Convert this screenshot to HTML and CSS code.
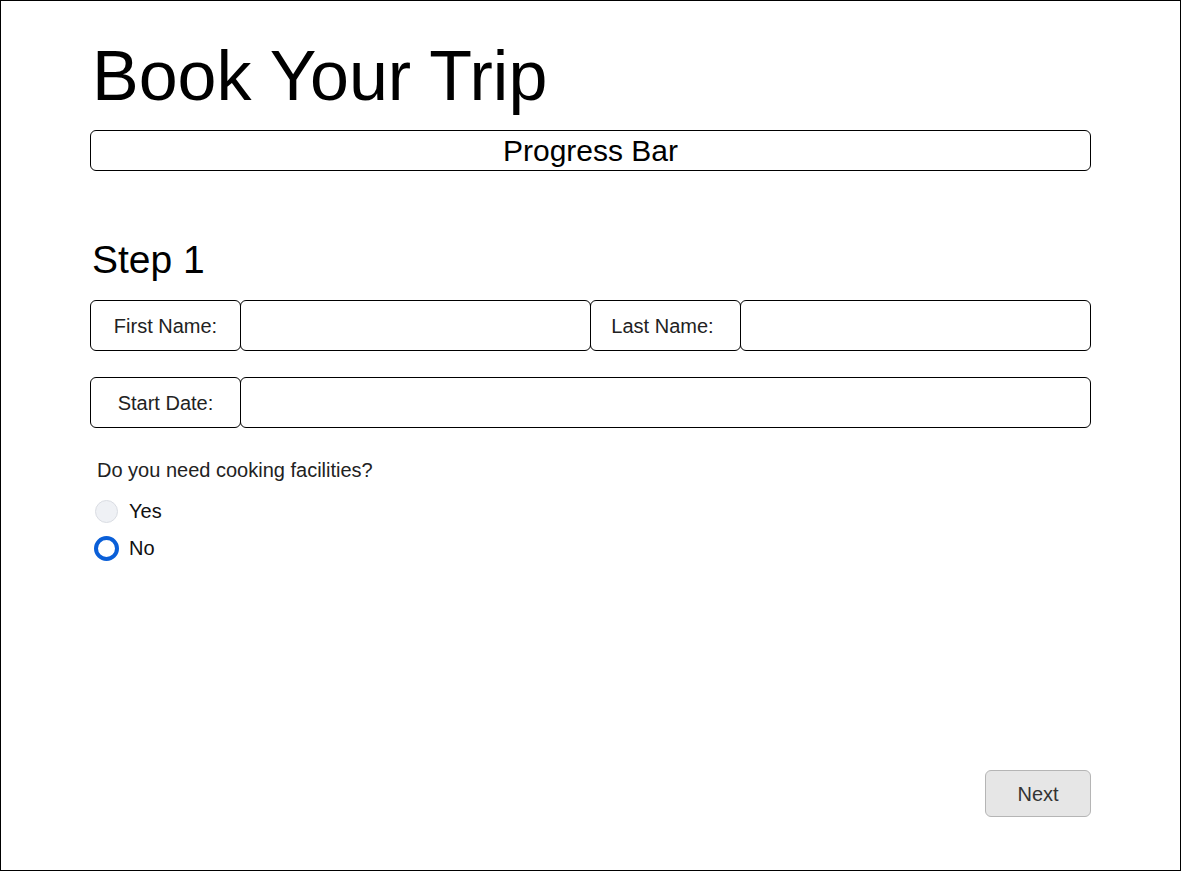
FILE: index.html
```html
<!DOCTYPE html>
<html lang="en">
<head>
<meta charset="utf-8">
<title>Book Your Trip</title>
<link rel="stylesheet" href="styles.css">
</head>
<body>
<div class="page">
  <h1 class="title">Book Your Trip</h1>
  <div class="progress">Progress Bar</div>
  <h2 class="step">Step 1</h2>
  <div class="row">
    <label class="label" for="fn">First Name:</label>
    <input class="field" id="fn" type="text">
    <label class="label label-last" for="ln">Last Name:</label>
    <input class="field" id="ln" type="text">
  </div>
  <div class="row">
    <label class="label" for="sd">Start Date:</label>
    <input class="field wide" id="sd" type="text">
  </div>
  <div class="question">
    <p class="q-text">Do you need cooking facilities?</p>
    <label class="opt"><input class="radio" type="radio" name="cook" value="yes"><span>Yes</span></label>
    <label class="opt"><input class="radio focused" type="radio" name="cook" value="no"><span>No</span></label>
  </div>
  <div class="actions">
    <button class="next" type="button">Next</button>
  </div>
</div>
</body>
</html>
```

FILE: styles.css
```css
html, body {
  margin: 0;
  padding: 0;
  background: #fff;
}

.page {
  box-sizing: border-box;
  width: 1181px;
  height: 871px;
  border: 1px solid #000;
  padding: 0 89px;
  display: flex;
  flex-direction: column;
  font-family: "Liberation Sans", Arial, sans-serif;
  color: #000;
}

.title {
  margin: 36px 0 0 2px;
  font-size: 70px;
  font-weight: normal;
  line-height: 78px;
}

.progress {
  margin-top: 15px;
  box-sizing: border-box;
  width: 1001px;
  height: 41px;
  border: 1px solid #000;
  border-radius: 6px;
  padding-top: 1px;
  font-size: 30px;
  line-height: 38px;
  text-align: center;
}

.step {
  margin: 67px 0 0 2px;
  font-size: 39px;
  font-weight: normal;
  line-height: 43px;
}

.row {
  display: flex;
  width: 1001px;
  height: 51px;
  margin-top: 19px;
}

.row + .row {
  margin-top: 26px;
}

.label {
  box-sizing: border-box;
  width: 151px;
  height: 51px;
  border: 1px solid #000;
  border-radius: 6px;
  display: flex;
  align-items: center;
  justify-content: center;
  padding-top: 2px;
  font-size: 20px;
  color: #222;
  flex: none;
}

.label-last {
  padding-right: 6px;
}

.field {
  box-sizing: border-box;
  width: 351px;
  height: 51px;
  border: 1px solid #000;
  border-radius: 6px;
  margin: 0 0 0 -1px;
  padding: 0 8px;
  font-family: inherit;
  font-size: 20px;
  background: #fff;
  flex: none;
  outline: none;
}

.row .field + .label {
  margin-left: -1px;
}

.field.wide {
  width: 851px;
}

.question {
  margin-top: 31px;
  padding-left: 5px;
  display: flex;
  flex-direction: column;
}

.q-text {
  margin: 0 0 18px 2px;
  font-size: 20px;
  line-height: 22px;
  color: #222;
}

.opt {
  display: flex;
  align-items: center;
  height: 24px;
  margin-bottom: 13px;
  font-size: 20px;
  color: #111;
}

.radio {
  -webkit-appearance: none;
  appearance: none;
  box-sizing: border-box;
  width: 23px;
  height: 23px;
  margin: 0 11px 0 0;
  border-radius: 50%;
  border: 1px solid #dadde3;
  background: #eff1f5;
  flex: none;
}

.radio.focused {
  width: 25px;
  height: 25px;
  margin-left: -1px;
  margin-right: 10px;
  border: 4px solid #0a5fd8;
  background: #fff;
}

.actions {
  margin-top: auto;
  margin-bottom: 53px;
  display: flex;
  justify-content: flex-end;
}

.next {
  box-sizing: border-box;
  width: 106px;
  height: 47px;
  border: 1px solid #b5b5b5;
  border-radius: 6px;
  background: #e6e6e6;
  color: #333;
  font-family: inherit;
  font-size: 20px;
  padding: 1px 0 0 0;
}
```
